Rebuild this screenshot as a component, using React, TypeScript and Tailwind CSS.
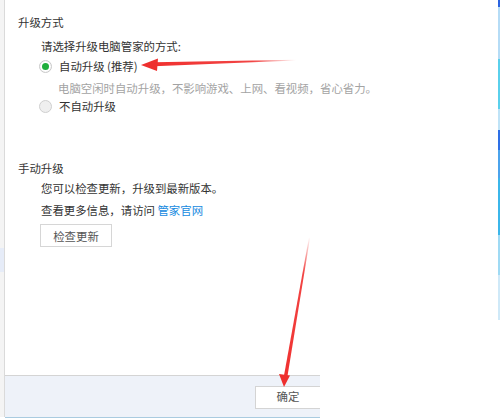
import React from "react";

const font = { fontFamily: '"Noto Sans CJK SC", "Microsoft YaHei", sans-serif' };

function Radio({ checked }: { checked: boolean }) {
  return checked ? (
    <span className="flex h-[13px] w-[13px] items-center justify-center rounded-full border border-[#c9c9c9] bg-white shadow-[inset_0_0_1px_#ddd]">
      <span className="h-[7px] w-[7px] rounded-full bg-[#1fae3c]" />
    </span>
  ) : (
    <span className="h-[13px] w-[13px] rounded-full border border-[#cfcfcf] bg-[#efefef]" />
  );
}

export default function App() {
  return (
    <div
      className="relative flex h-[418px] w-[500px] overflow-hidden bg-white text-[11.4px] text-[#333] [text-spacing-trim:space-all]"
      style={font}
    >
      {/* left strip */}
      <div className="flex h-[417px] w-[5px] flex-col border-r border-[#dadada] bg-[#f4f4f4]">
        <div className="h-[248px]" />
        <div className="h-[24px] bg-[#e6ecf8]" />
      </div>

      {/* main column */}
      <div className="flex flex-1 flex-col">
        <div className="flex flex-1 flex-col pl-[13px] pt-[14px] leading-[16px]">
          <div>升级方式</div>
          <div className="mt-[8px] pl-[23px]">请选择升级电脑管家的方式:</div>
          <div className="mt-[3px] flex items-center gap-[7px] pl-[21px] pt-[1px]">
            <Radio checked />
            <span>自动升级 (推荐)</span>
          </div>
          <div className="mt-[6px] pl-[40px] text-[#a3a3a3]">
            电脑空闲时自动升级，不影响游戏、上网、看视频，省心省力。
          </div>
          <div className="mt-[2px] flex items-center gap-[7px] pl-[21px]">
            <Radio checked={false} />
            <span>不自动升级</span>
          </div>

          <div className="mt-[46px]">手动升级</div>
          <div className="mt-[4px] pl-[23px]">您可以检查更新，升级到最新版本。</div>
          <div className="mt-[6px] pl-[23px]">
            查看更多信息，请访问 <span className="text-[#168ae0]">管家官网</span>
          </div>
          <div className="mt-[6px] pl-[22px]">
            <button className="flex h-[23px] w-[72px] items-center justify-center border border-[#d6d6d6] bg-white text-[#555]">
              检查更新
            </button>
          </div>
        </div>

        {/* bottom bar */}
        <div className="flex h-[43px]">
          <div className="flex w-[315px] flex-col">
            <div className="flex h-[42px] items-center justify-end border-t border-[#d4d4d4] bg-[#eef2f9] pt-[1px]">
              <button className="flex h-[23px] w-[65px] items-center justify-center border border-[#d4d4d4] border-r-0 bg-white text-[#555]">
                确定
              </button>
            </div>
            <div className="h-[1px] bg-[#a9cbe0]" />
          </div>
        </div>
      </div>

      {/* right strip */}
      <div className="flex w-[2px] flex-col">
        <div className="h-[7px] bg-[#2b63e0]" />
        <div className="h-[52px] bg-[#b5dcf6]" />
        <div className="h-[50px] bg-[#5ad0ec]" />
        <div className="h-[21px] bg-[#bfe3f7]" />
        <div className="h-[20px] bg-[#2e70e6]" />
        <div className="h-[28px] bg-[#4ba3ec]" />
        <div className="h-[57px] bg-[#3bb6ea]" />
        <div className="h-[40px] bg-[#9fdaf4]" />
        <div className="h-[45px] bg-[#cfe9f8]" />
        <div className="flex-1" />
      </div>

      {/* annotation arrows */}
      <svg className="pointer-events-none absolute left-0 top-0" width="500" height="418">
        <defs>
          <linearGradient id="g1" x1="150" y1="0" x2="296" y2="0" gradientUnits="userSpaceOnUse">
            <stop offset="0" stopColor="#f0302f" stopOpacity="1" />
            <stop offset="0.7" stopColor="#f0302f" stopOpacity="0.9" />
            <stop offset="1" stopColor="#f0302f" stopOpacity="0" />
          </linearGradient>
          <linearGradient id="g2" x1="0" y1="237" x2="0" y2="380" gradientUnits="userSpaceOnUse">
            <stop offset="0" stopColor="#f0302f" stopOpacity="0" />
            <stop offset="0.25" stopColor="#f0302f" stopOpacity="0.9" />
            <stop offset="1" stopColor="#f0302f" stopOpacity="1" />
          </linearGradient>
        </defs>
        <polygon points="154,62.3 296,59.8 296,60.6 154,66.3" fill="url(#g1)" />
        <polygon points="141,65 158,58.5 157,71" fill="#ee2f2e" />
        <polygon points="309,237 310,238 287.5,376 284,375.5" fill="url(#g2)" />
        <polygon points="284,387 279,374 290,375.5" fill="#ee2f2e" />
      </svg>
    </div>
  );
}
